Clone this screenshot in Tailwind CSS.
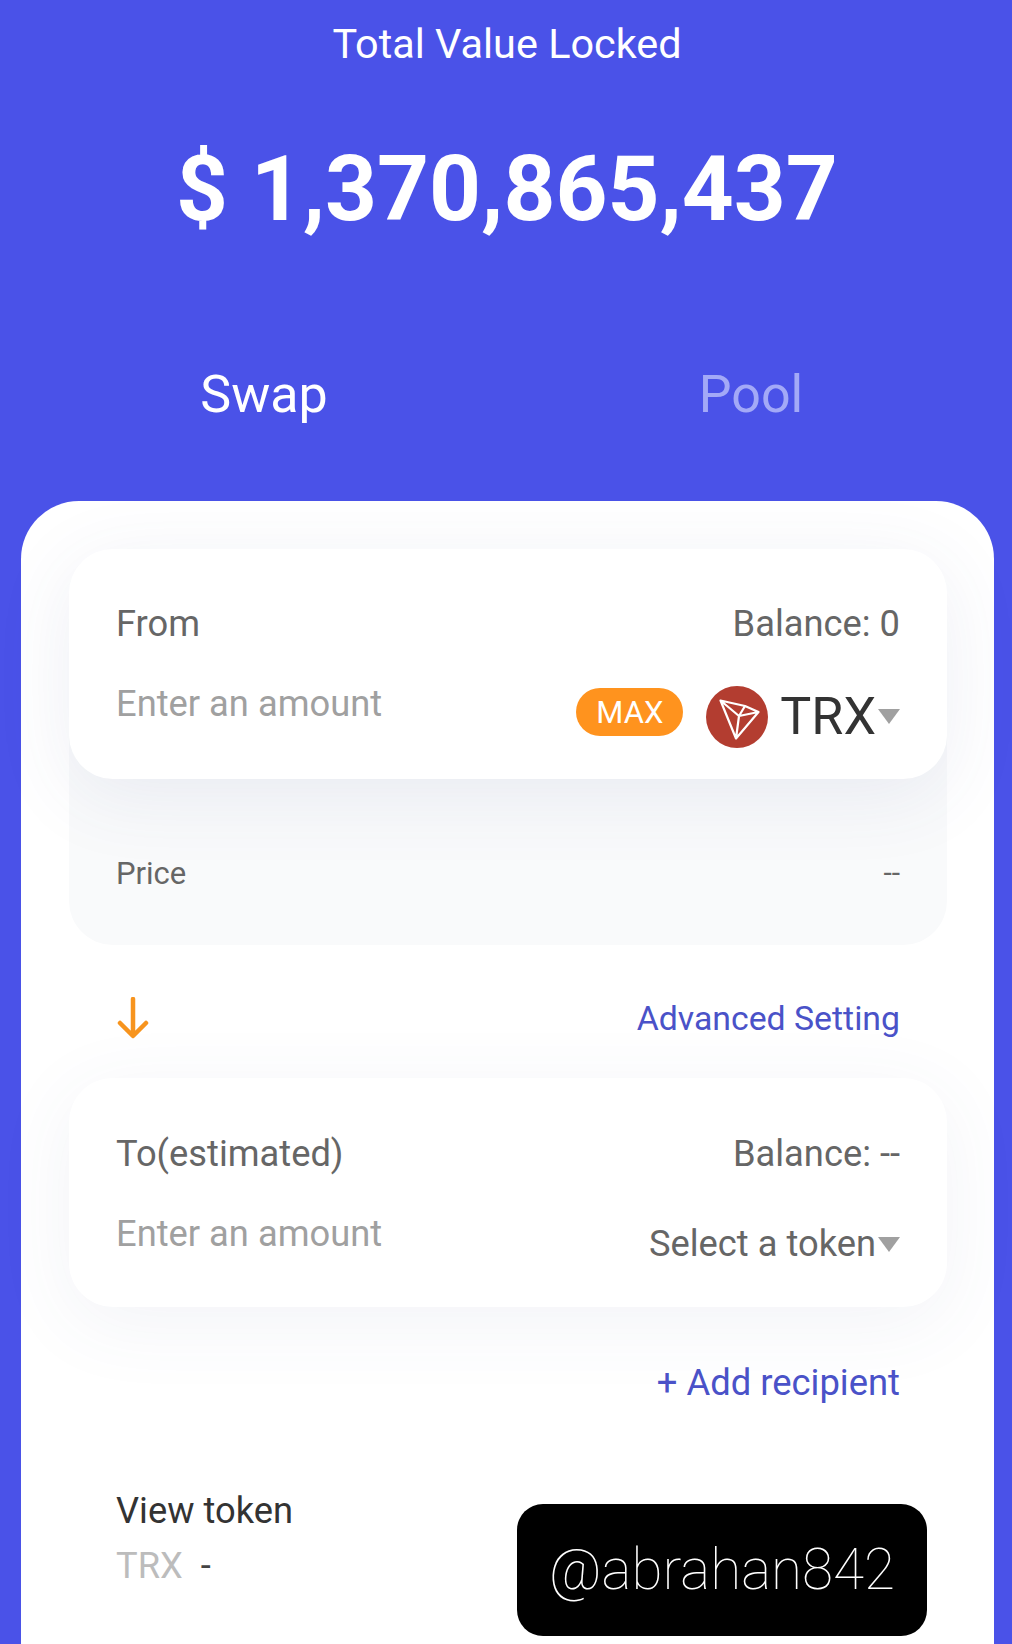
<!DOCTYPE html>
<html>
<head>
<meta charset="utf-8">
<script src="https://cdn.jsdelivr.net/npm/@tailwindcss/browser@4"></script>
</head>
<body class="m-0">
<div class="w-[1012px] h-[1644px] overflow-hidden bg-[#4a52e8] font-['Roboto',sans-serif] flex flex-col">
  <div class="h-[90px] pl-[2px] flex items-center justify-center text-white text-[41.4px] leading-none">Total Value Locked</div>
  <div class="h-[100px] mt-[49px] pl-[2px] flex items-center justify-center text-white text-[90.7px] font-bold leading-none">$ 1,370,865,437</div>
  <div class="h-[262px] pt-[130px] flex text-[52px] leading-none">
    <div class="w-[528px] flex justify-center items-start text-white">Swap</div>
    <div class="flex-1 pr-[38px] flex justify-center items-start text-[#a3a9f7]">Pool</div>
  </div>
  <div class="ml-[21px] mr-[18px] flex-1 bg-white rounded-t-[58px] pl-[48px] pr-[47px] pt-[48px]">
    <div class="relative">
      <div class="absolute inset-x-0 top-[150px] h-[246px] rounded-[44px] bg-[#f9fafb] pt-[159px] px-[47px] flex justify-between text-[31px] leading-none text-[#666666]">
        <span>Price</span><span class="text-[30px]">--</span>
      </div>
      <div class="relative h-[230px] rounded-[44px] bg-white shadow-[0_16px_80px_rgba(70,80,140,0.09)] px-[47px] pt-[54px]">
        <div class="flex justify-between text-[36.3px] leading-[42px] text-[#666666]">
          <span>From</span><span>Balance: 0</span>
        </div>
        <div class="flex justify-between items-start mt-[15px]">
          <span class="text-[36.3px] leading-[48px] text-[#a0a0a0] pt-[20px]">Enter an amount</span>
          <div class="flex items-center h-[62px] mt-[26px]">
            <div class="w-[107px] h-[48px] rounded-[24px] bg-[#ff931e] text-white text-[31px] leading-none flex items-center justify-center -mt-[10px]">MAX</div>
            <svg class="ml-[23px] w-[62px] h-[62px]" viewBox="0 0 62 62">
              <circle cx="31" cy="31" r="31" fill="#b33d30"/>
              <path d="M14.5 14.5 L39 20 L52.5 26 L30 52.5 Z M14.5 14.5 L33 30 L30 52.5 M33 30 L39 20 M33 30 L52.5 26" fill="none" stroke="#fff" stroke-width="2.2" stroke-linejoin="round"/>
            </svg>
            <span class="ml-[12px] text-[52px] leading-none text-[#333333]">TRX</span>
            <svg class="ml-[2px] w-[22px] h-[15px] -mt-[1px]" viewBox="0 0 22 15"><path d="M0 0H22L11 15Z" fill="#a0a0a0"/></svg>
          </div>
        </div>
      </div>
    </div>
    <div class="mt-[166px] h-[133px] px-[47px] flex justify-between items-start pt-[52px]">
      <svg class="w-[32px] h-[42px] ml-[1px]" viewBox="0 0 32 42"><path d="M16 2V38M3 26L16 39L29 26" fill="none" stroke="#f7941e" stroke-width="4.5" stroke-linecap="round" stroke-linejoin="round"/></svg>
      <span class="text-[33.8px] leading-[44px] text-[#4a52c8]">Advanced Setting</span>
    </div>
    <div class="h-[229px] rounded-[44px] bg-white shadow-[0_16px_80px_rgba(70,80,140,0.07)] px-[47px] pt-[55px]">
      <div class="flex justify-between text-[36.3px] leading-[42px] text-[#666666]">
        <span>To(estimated)</span><span>Balance: --</span>
      </div>
      <div class="flex justify-between items-start mt-[15px]">
        <span class="text-[36.3px] leading-[48px] text-[#a0a0a0] pt-[20px]">Enter an amount</span>
        <div class="flex items-center h-[62px] mt-[23px]">
          <span class="text-[36.3px] leading-none text-[#666666]">Select a token</span>
          <svg class="ml-[2px] w-[22px] h-[15px]" viewBox="0 0 22 15"><path d="M0 0H22L11 15Z" fill="#a0a0a0"/></svg>
        </div>
      </div>
    </div>
    <div class="mt-[54px] px-[47px] flex justify-end text-[36.4px] leading-[44px] text-[#4a52c8]">+ Add recipient</div>
    <div class="relative mt-[84px] px-[47px]">
      <div class="text-[36.3px] leading-[44px] text-[#333333]">View token</div>
      <div class="mt-[11px] flex items-center text-[36.3px] leading-[44px]">
        <span class="text-[#bcbcbc]">TRX</span><span class="ml-[18px] text-[#444444]">-</span>
      </div>
      <div class="absolute left-[448px] top-[15px] w-[410px] h-[132px] bg-black rounded-[26px] flex items-center justify-center text-white text-[56.6px] font-thin leading-none">@abrahan842</div>
    </div>
  </div>
</div>
</body>
</html>
